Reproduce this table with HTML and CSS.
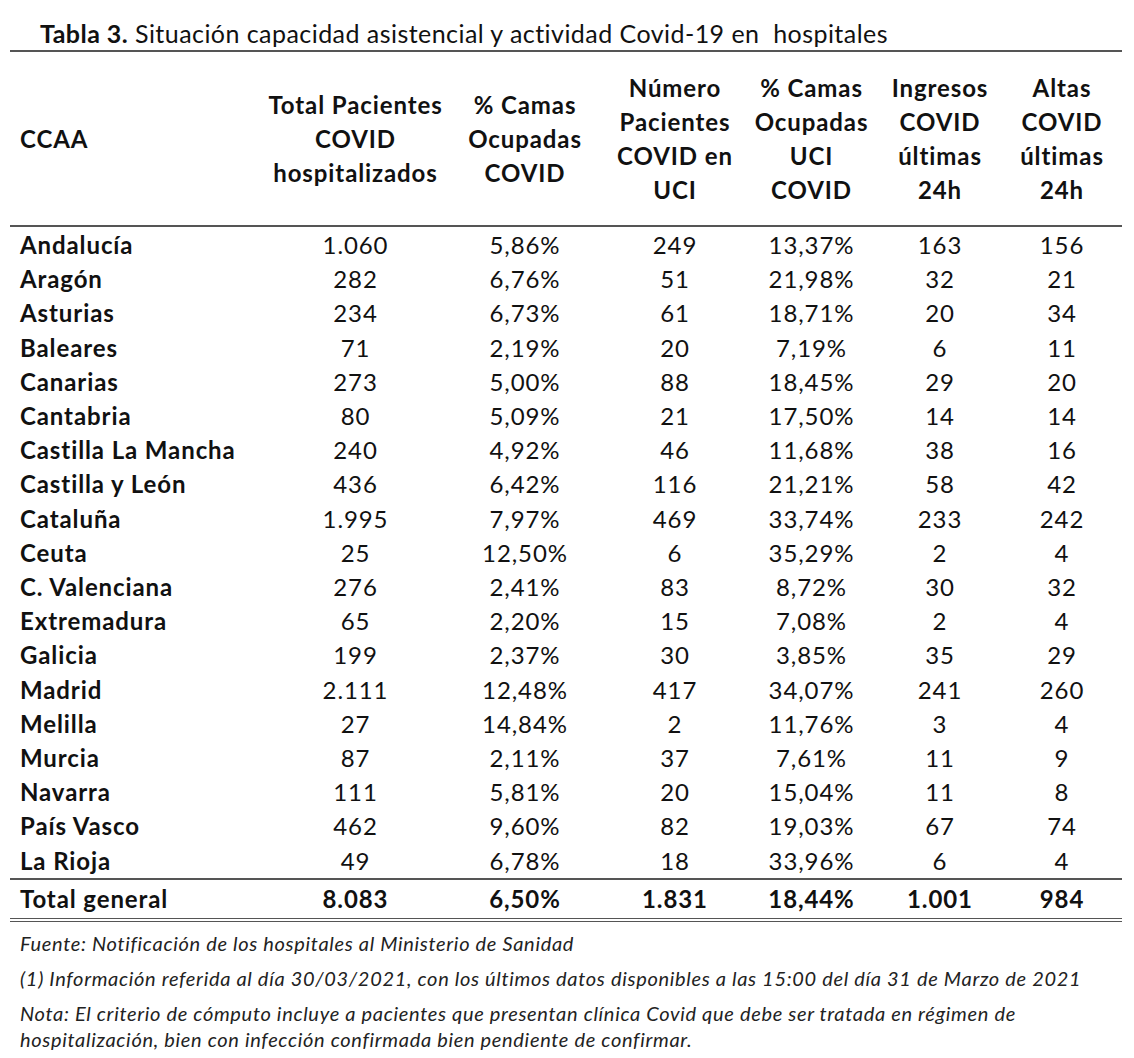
FILE: index.html
```html
<!DOCTYPE html>
<html lang="es">

<head>
    <meta charset="UTF-8">
    <title>Tabla 3 - Capacidad asistencial Covid-19</title>
    <link rel="stylesheet" href="styles.css">
</head>

<body>
    <div class="page">
        <!-- Table title -->
        <p class="title"><b>Tabla 3.</b> Situación capacidad asistencial y actividad Covid-19 en&nbsp; hospitales</p>

        <table class="data">
            <colgroup>
                <col class="c-name">
                <col class="c-total">
                <col class="c-camas">
                <col class="c-uci">
                <col class="c-camas-uci">
                <col class="c-ingresos">
                <col class="c-altas">
            </colgroup>
            <thead>
                <tr>
                    <th class="name">CCAA</th>
                    <th>Total Pacientes<br>COVID<br>hospitalizados</th>
                    <th>% Camas<br>Ocupadas<br>COVID</th>
                    <th>Número<br>Pacientes<br>COVID en<br>UCI</th>
                    <th>% Camas<br>Ocupadas<br>UCI<br>COVID</th>
                    <th>Ingresos<br>COVID<br>últimas<br>24h</th>
                    <th>Altas<br>COVID<br>últimas<br>24h</th>
                </tr>
            </thead>
            <tbody>
                <tr><td class="name">Andalucía</td><td>1.060</td><td>5,86%</td><td>249</td><td>13,37%</td><td>163</td><td>156</td></tr>
                <tr><td class="name">Aragón</td><td>282</td><td>6,76%</td><td>51</td><td>21,98%</td><td>32</td><td>21</td></tr>
                <tr><td class="name">Asturias</td><td>234</td><td>6,73%</td><td>61</td><td>18,71%</td><td>20</td><td>34</td></tr>
                <tr><td class="name">Baleares</td><td>71</td><td>2,19%</td><td>20</td><td>7,19%</td><td>6</td><td>11</td></tr>
                <tr><td class="name">Canarias</td><td>273</td><td>5,00%</td><td>88</td><td>18,45%</td><td>29</td><td>20</td></tr>
                <tr><td class="name">Cantabria</td><td>80</td><td>5,09%</td><td>21</td><td>17,50%</td><td>14</td><td>14</td></tr>
                <tr><td class="name">Castilla La Mancha</td><td>240</td><td>4,92%</td><td>46</td><td>11,68%</td><td>38</td><td>16</td></tr>
                <tr><td class="name">Castilla y León</td><td>436</td><td>6,42%</td><td>116</td><td>21,21%</td><td>58</td><td>42</td></tr>
                <tr><td class="name">Cataluña</td><td>1.995</td><td>7,97%</td><td>469</td><td>33,74%</td><td>233</td><td>242</td></tr>
                <tr><td class="name">Ceuta</td><td>25</td><td>12,50%</td><td>6</td><td>35,29%</td><td>2</td><td>4</td></tr>
                <tr><td class="name">C. Valenciana</td><td>276</td><td>2,41%</td><td>83</td><td>8,72%</td><td>30</td><td>32</td></tr>
                <tr><td class="name">Extremadura</td><td>65</td><td>2,20%</td><td>15</td><td>7,08%</td><td>2</td><td>4</td></tr>
                <tr><td class="name">Galicia</td><td>199</td><td>2,37%</td><td>30</td><td>3,85%</td><td>35</td><td>29</td></tr>
                <tr><td class="name">Madrid</td><td>2.111</td><td>12,48%</td><td>417</td><td>34,07%</td><td>241</td><td>260</td></tr>
                <tr><td class="name">Melilla</td><td>27</td><td>14,84%</td><td>2</td><td>11,76%</td><td>3</td><td>4</td></tr>
                <tr><td class="name">Murcia</td><td>87</td><td>2,11%</td><td>37</td><td>7,61%</td><td>11</td><td>9</td></tr>
                <tr><td class="name">Navarra</td><td>111</td><td>5,81%</td><td>20</td><td>15,04%</td><td>11</td><td>8</td></tr>
                <tr><td class="name">País Vasco</td><td>462</td><td>9,60%</td><td>82</td><td>19,03%</td><td>67</td><td>74</td></tr>
                <tr><td class="name">La Rioja</td><td>49</td><td>6,78%</td><td>18</td><td>33,96%</td><td>6</td><td>4</td></tr>
            </tbody>
            <tfoot>
                <tr><td class="name">Total general</td><td>8.083</td><td>6,50%</td><td>1.831</td><td>18,44%</td><td>1.001</td><td>984</td></tr>
            </tfoot>
        </table>

        <!-- Footnotes -->
        <div class="notes">
            <p>Fuente: Notificación de los hospitales al Ministerio de Sanidad</p>
            <p>(1) Información referida al día 30/03/2021, con los últimos datos disponibles a las 15:00 del día 31 de Marzo de 2021</p>
            <p>Nota: El criterio de cómputo incluye a pacientes que presentan clínica Covid que debe ser tratada en régimen de<br>hospitalización, bien con infección confirmada bien pendiente de confirmar.</p>
        </div>
    </div>
</body>

</html>
```

FILE: styles.css
```css
/* Basic reset */

* {
    margin: 0;
    padding: 0;
    box-sizing: border-box;
}

body {
    font-family: Lato, "Open Sans", Arial, sans-serif;
    background-color: #fff;
    color: #111;
}

.page {
    padding: 17px 12px 0 10px;
}

.title {
    padding-left: 30px;
    font-size: 25px;
    letter-spacing: 0.45px;
    line-height: 33px;
}

/* Main table */

.data {
    width: 1112px;
    table-layout: fixed;
    border-collapse: collapse;
    border-top: 2px solid #555;
}

.c-name { width: 256px; }
.c-total { width: 179px; }
.c-camas { width: 160px; }
.c-uci { width: 140px; }
.c-camas-uci { width: 133px; }
.c-ingresos { width: 124px; }
.c-altas { width: 120px; }

th,
td {
    font-size: 24px;
    letter-spacing: 0.9px;
}

th {
    font-weight: bold;
    line-height: 34px;
    padding: 19px 0 18px;
    text-align: center;
    vertical-align: middle;
}

thead tr {
    border-bottom: 2px solid #555;
}

td {
    line-height: 34.2px;
    text-align: center;
}

tbody tr:first-child td {
    padding-top: 1px;
}

th.name,
td.name {
    text-align: left;
    padding-left: 10px;
}

td.name {
    font-weight: bold;
}

tfoot tr {
    border-top: 2px solid #555;
    border-bottom: 4px double #555;
}

tfoot td {
    font-weight: bold;
    line-height: 38px;
}

/* Footnotes */

.notes {
    padding: 8px 0 0 10px;
    font-size: 20px;
    font-style: italic;
    letter-spacing: 0.68px;
    line-height: 26px;
    color: #222;
}

.notes p {
    margin-bottom: 9px;
}
```
